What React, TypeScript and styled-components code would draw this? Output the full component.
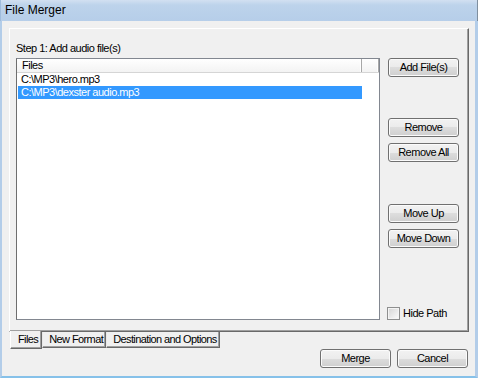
import React from 'react';
import styled, { createGlobalStyle } from 'styled-components';

const Global = createGlobalStyle`
  html, body { margin: 0; padding: 0; background: #ffffff; }
  body { font-family: "Liberation Sans", Arial, sans-serif; }
  * { box-sizing: border-box; }
`;

const Window = styled.div`
  width: 478px;
  height: 378px;
  display: flex;
  flex-direction: column;
  overflow: hidden;
`;

const TitleBar = styled.div`
  height: 21px;
  flex: none;
  background: linear-gradient(#d2e0f1 0px, #bdd3eb 5px, #b6cee9 100%);
  border-left: 1px solid #9fbcdc;
  border-right: 1px solid #7f8f9f;
  padding-left: 4px;
  font-size: 12px;
  line-height: 21px;
  color: #000;
`;

const Frame = styled.div`
  flex: 1;
  display: flex;
  flex-direction: column;
  background: #f0f0f0;
  border-left: 2px solid #b3cde9;
  border-right: 3px solid #b3cde9;
  border-bottom: 2px solid #86c1e9;
  padding: 7px 6px 0 7px;
  font-size: 11px;
  letter-spacing: -0.5px;
  color: #000;
`;

const Panel = styled.div`
  height: 304px;
  flex: none;
  border: 1px solid;
  border-color: #ffffff #696969 #696969 #ffffff;
  box-shadow: inset -1px -1px 0 #a0a0a0;
  padding: 13px 0 11px 6px;
  display: grid;
  grid-template-columns: 364px 71px;
  grid-template-rows: 13px 1fr;
  column-gap: 8px;
  row-gap: 3px;
`;

const StepLabel = styled.div`
  grid-column: 1 / span 2;
  line-height: 13px;
  white-space: nowrap;
`;

const ListBox = styled.div`
  background: #ffffff;
  border: 1px solid #828790;
  border-left-color: #6e6e6e;
  display: flex;
  flex-direction: column;
`;

const Header = styled.div`
  height: 14px;
  display: flex;
  background: linear-gradient(#ffffff, #f3f3f3);
  border-bottom: 1px solid #d5d5d5;
  flex: none;
`;

const HeaderCell = styled.div<{ $w?: number }>`
  ${(p) => (p.$w ? `width: ${p.$w}px; flex: none;` : 'flex: 1;')}
  border-right: 1px solid #a8a8a8;
  box-shadow: inset -1px 0 0 #ffffff;
  padding-left: 5px;
  line-height: 13px;
`;

const Row = styled.div<{ $sel?: boolean }>`
  width: 344px;
  height: 13px;
  line-height: 13px;
  padding-left: 3px;
  margin-left: 1px;
  white-space: nowrap;
  background: ${(p) => (p.$sel ? '#3399ff' : 'transparent')};
  color: ${(p) => (p.$sel ? '#ffffff' : '#000000')};
`;

const SideColumn = styled.div`
  display: flex;
  flex-direction: column;
`;

const Button = styled.button<{ $gap?: number }>`
  width: 71px;
  height: 19px;
  flex: none;
  margin: ${(p) => (p.$gap ?? 0)}px 0 0 0;
  padding: 0;
  font-family: "Liberation Sans", Arial, sans-serif;
  font-size: 11px;
  letter-spacing: -0.5px;
  color: #000;
  border: 1px solid #707070;
  border-radius: 3px;
  background: linear-gradient(#f2f2f2 0%, #ebebeb 50%, #dddddd 50%, #cfcfcf 100%);
  box-shadow: inset 0 0 0 1px #fbfbfb;
  line-height: 15px;
`;

const CheckRow = styled.label`
  margin-top: auto;
  margin-left: -1px;
  display: flex;
  align-items: center;
  gap: 3px;
  height: 13px;
  line-height: 13px;
  white-space: nowrap;
`;

const CheckBox = styled.span`
  width: 13px;
  height: 13px;
  flex: none;
  border: 1px solid #8e8f8f;
  background: linear-gradient(135deg, #d4d4d4, #f4f4f4 80%, #ffffff);
  box-shadow: inset 0 0 0 1px #f4f4f4;
`;

const TabStrip = styled.div`
  display: flex;
  align-items: flex-start;
  height: 18px;
  margin-top: -1px;
  padding-left: 1px;
  flex: none;
  letter-spacing: -0.6px;
`;

const Tab = styled.div<{ $active?: boolean }>`
  height: ${(p) => (p.$active ? 18 : 16)}px;
  margin-top: ${(p) => (p.$active ? 0 : 1)}px;
  padding: ${(p) => (p.$active ? '1px 3px 0 7px' : '0 2px 0 6px')};
  background: #f0f0f0;
  border-left: 1px solid ${(p) => (p.$active ? '#ffffff' : '#e8e8e8')};
  border-right: 1px solid #696969;
  border-bottom: 1px solid #696969;
  box-shadow: inset -1px -1px 0 #a0a0a0;
  line-height: 14px;
  white-space: nowrap;
`;

const ButtonRow = styled.div`
  display: flex;
  justify-content: flex-end;
  gap: 6px;
  padding-right: 1px;
  flex: none;
`;

export default function App() {
  return (
    <>
      <Global />
      <Window>
        <TitleBar>File Merger</TitleBar>
        <Frame>
          <Panel>
            <StepLabel>Step 1: Add audio file(s)</StepLabel>
            <ListBox>
              <Header>
                <HeaderCell $w={345}>Files</HeaderCell>
                <HeaderCell />
              </Header>
              <Row>C:\MP3\hero.mp3</Row>
              <Row $sel>C:\MP3\dexster audio.mp3</Row>
            </ListBox>
            <SideColumn>
              <Button>Add File(s)</Button>
              <Button $gap={41}>Remove</Button>
              <Button $gap={6}>Remove All</Button>
              <Button $gap={42}>Move Up</Button>
              <Button $gap={6}>Move Down</Button>
              <CheckRow>
                <CheckBox />
                Hide Path
              </CheckRow>
            </SideColumn>
          </Panel>
          <TabStrip>
            <Tab $active>Files</Tab>
            <Tab>New Format</Tab>
            <Tab>Destination and Options</Tab>
          </TabStrip>
          <ButtonRow>
            <Button>Merge</Button>
            <Button>Cancel</Button>
          </ButtonRow>
        </Frame>
      </Window>
    </>
  );
}
